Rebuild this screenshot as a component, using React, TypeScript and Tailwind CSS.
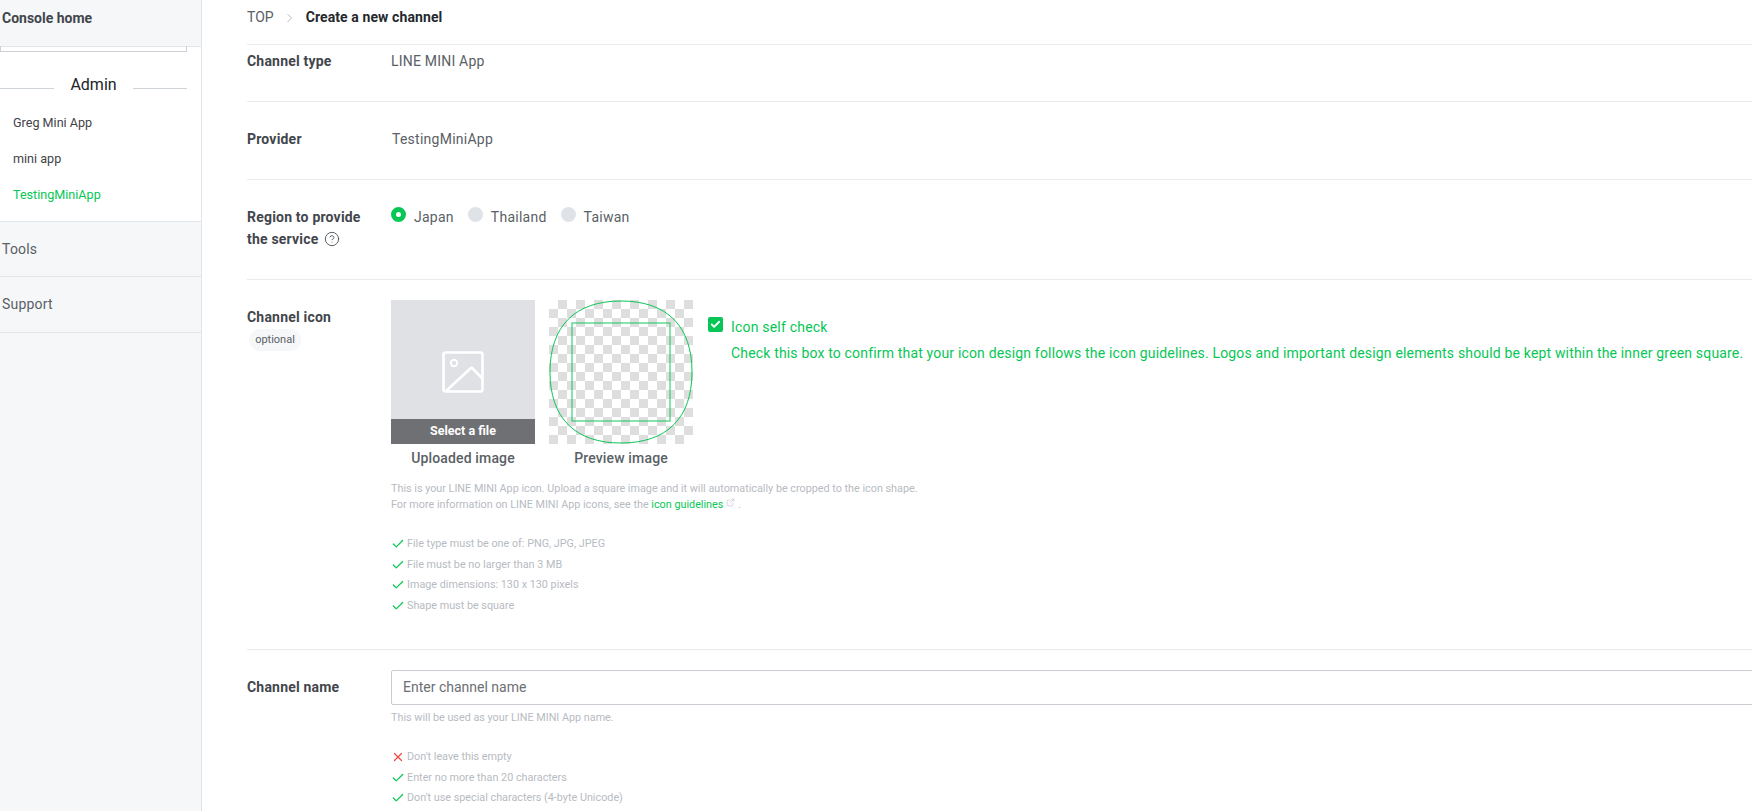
import { Check, CircleHelp, ExternalLink, X } from "lucide-react"
import type { ReactNode } from "react"

const sidebarApps = ["Greg Mini App", "mini app", "TestingMiniApp"]
const fileRules = [
    "File type must be one of: PNG, JPG, JPEG",
    "File must be no larger than 3 MB",
    "Image dimensions: 130 x 130 pixels",
    "Shape must be square",
]

function Rule({ text, ok = true }: { text: string, ok?: boolean }) {
    return (
        <li className="flex items-center h-[20.5px] text-[10.8px] text-[#b7bbc2]">
            {ok ? (
                <Check className="w-[14px] h-[14px] text-[#06c755] mr-[2px] shrink-0" strokeWidth={2.1} />
            ) : (
                <X className="w-[14px] h-[14px] text-[#ef4a45] mr-[2px] shrink-0" strokeWidth={2.1} />
            )}
            {text}
        </li>
    )
}

function FormRow({ label, className, children }: { label: ReactNode, className: string, children: ReactNode }) {
    return (
        <div className={`flex border-b border-[#e9ebee] ${className}`}>
            <div className="w-[144px] shrink-0 text-sm leading-[22px] font-bold tracking-[0.2px] text-[#42464c]">{label}</div>
            <div className="flex-1 min-w-0">{children}</div>
        </div>
    )
}

function Radio({ label, selected = false }: { label: string, selected?: boolean }) {
    return (
        <div className="flex items-start">
            {selected ? (
                <span className="w-[15px] h-[15px] rounded-full border-[5px] border-[#06c755] bg-white" />
            ) : (
                <span className="w-[15px] h-[15px] rounded-full bg-[#dfe2e7]" />
            )}
            <span className="ml-2 text-sm leading-[22px] text-[#5a5f66] -mt-[1px] tracking-[0.25px]">{label}</span>
        </div>
    )
}

export default function App() {
    return (
        <div className="flex h-screen overflow-hidden bg-white font-['Roboto',sans-serif]">
            <aside className="w-[202px] shrink-0 border-r border-[#e1e5ea] bg-white flex flex-col">
                <div className="h-[47px] bg-[#f5f7f9] border-b border-[#e1e5ea] pl-[2px] pt-[9px] text-sm leading-[18px] font-bold text-[#42464c]">
                    Console home
                </div>
                <div className="w-[187px] h-[6px] -mt-px border border-t-0 border-[#cdd1d7]" />
                <div className="w-[187px] flex items-center mt-[23px] h-[20px]">
                    <div className="w-[54px] h-px bg-[#cfd4da] mt-[6px]" />
                    <span className="flex-1 text-center text-base text-[#20242a]">Admin</span>
                    <div className="w-[54px] h-px bg-[#cfd4da] mt-[6px]" />
                </div>
                <ul className="pt-[10px] pb-[8px] pl-[13px]">
                    {sidebarApps.map((app) => (
                        <li
                            key={app}
                            className={`h-[36px] flex items-center text-[12.6px] ${app === "TestingMiniApp" ? "text-[#06c755]" : "text-[#3f4349]"}`}
                        >
                            {app}
                        </li>
                    ))}
                </ul>
                <div className="flex-1 bg-[#f5f7f9] border-t border-[#e1e5ea]">
                    <div className="h-[55px] pb-[1px] border-b border-[#e1e5ea] pl-[2px] flex items-center text-sm tracking-[0.2px] text-[#5a5f66]">Tools</div>
                    <div className="h-[56px] pb-[1px] border-b border-[#e1e5ea] pl-[2px] flex items-center text-sm tracking-[0.2px] text-[#5a5f66]">Support</div>
                </div>
            </aside>

            <main className="flex-1 min-w-0 pl-[45px]">
                <div className="h-[45px] border-b border-[#e9ebee] flex items-start pt-[8px] text-sm leading-[18px]">
                    <span className="text-[#5a5f66]">TOP</span>
                    <svg viewBox="0 0 8 10" className="w-[8px] h-[10px] ml-[12px] mr-[12px] mt-[5px] text-[#b7bbc2]" fill="none" stroke="currentColor">
                        <path d="M1.5 1l4 4-4 4" />
                    </svg>
                    <span className="font-bold tracking-[0.1px] text-[#25282d]">Create a new channel</span>
                </div>

                <FormRow label="Channel type" className="h-[57px] pt-[5px]">
                    <p className="text-sm leading-[22px] font-normal text-[#5a5f66] tracking-[0.2px]">LINE MINI App</p>
                </FormRow>

                <FormRow label="Provider" className="h-[78px] pt-[26px]">
                    <p className="text-sm leading-[22px] text-[#5a5f66] tracking-[0.25px] pl-px">TestingMiniApp</p>
                </FormRow>

                <FormRow
                    className="h-[100px] pt-[26px]"
                    label={
                        <>
                            Region to provide<br />
                            the service
                            <CircleHelp className="inline w-[16px] h-[16px] ml-[6px] -mt-[2px] text-[#5a5f66]" strokeWidth={1.5} />
                        </>
                    }
                >
                    <div className="flex gap-[14px] pt-[1px]">
                        <Radio label="Japan" selected />
                        <Radio label="Thailand" />
                        <Radio label="Taiwan" />
                    </div>
                </FormRow>

                <FormRow
                    className="h-[370px] pt-[20px]"
                    label={
                        <div className="pt-[6px]">
                            Channel icon
                            <div className="mt-[1px] ml-[2px] w-[52px] h-[22px] rounded-full bg-[#f5f7f9] flex items-center justify-center text-[11px] font-normal tracking-normal text-[#5a5f66]">
                                optional
                            </div>
                        </div>
                    }
                >
                    <div className="flex items-start">
                        <div className="w-[144px]">
                            <div className="relative w-[144px] h-[144px] bg-[#dfe1e5] flex justify-center pt-[51px]">
                                <svg viewBox="0 0 42 42" className="w-[42px] h-[42px]" fill="none" stroke="#fff" strokeWidth="2.6" strokeLinejoin="round">
                                    <rect x="1.5" y="1.5" width="39" height="39" rx="2" />
                                    <circle cx="12" cy="12" r="3.2" strokeWidth="2" />
                                    <path d="M4 40 L29.5 16.5 L40 27" />
                                </svg>
                                <div className="absolute inset-x-0 bottom-0 h-[25px] bg-[#6f7073] flex items-center justify-center text-[12.5px] font-bold text-white">
                                    Select a file
                                </div>
                            </div>
                            <p className="mt-[3px] text-center text-sm leading-[22px] font-medium tracking-[0.15px] text-[#5a5f66]">Uploaded image</p>
                        </div>
                        <div className="w-[144px] ml-[14px]">
                            <div className="relative w-[144px] h-[144px] bg-[repeating-conic-gradient(#dedede_0_25%,#fff_0_50%)] bg-[length:18px_18px]">
                                <svg viewBox="0 0 144 144" className="absolute inset-0 w-[144px] h-[144px]" fill="none">
                                    <path d="M72 1 C118 1 143 26 143 72 S118 143 72 143 S1 118 1 72 S26 1 72 1Z" stroke="#06c755" strokeWidth="1" />
                                    <rect x="23" y="23" width="98" height="98" stroke="#06c755" strokeOpacity="0.6" strokeWidth="1.6" />
                                </svg>
                            </div>
                            <p className="mt-[3px] text-center text-sm leading-[22px] font-medium tracking-[0.15px] text-[#5a5f66]">Preview image</p>
                        </div>
                        <div className="ml-[15px] pt-[17px] flex items-start">
                            <span className="w-[15px] h-[15px] rounded-[2px] bg-[#06c755] flex items-center justify-center shrink-0">
                                <Check className="w-[11px] h-[11px] text-white" strokeWidth={4} />
                            </span>
                            <div className="ml-[8px] text-sm text-[#06c755] -mt-[1px]">
                                <p className="leading-[22px] tracking-[0.2px]">Icon self check</p>
                                <p className="leading-[22px] mt-[4px] whitespace-nowrap tracking-[0.17px]">
                                    Check this box to confirm that your icon design follows the icon guidelines. Logos and important design elements should be kept within the inner green square.
                                </p>
                            </div>
                        </div>
                    </div>
                    <div className="mt-[12px] text-[10.8px] leading-[16px] text-[#b7bbc2]">
                        <p>This is your LINE MINI App icon. Upload a square image and it will automatically be cropped to the icon shape.</p>
                        <p>
                            For more information on LINE MINI App icons, see the <span className="text-[#06c755]">icon guidelines</span>
                            <ExternalLink className="inline w-[9px] h-[9px] ml-[3px] -mt-[6px]" strokeWidth={1.5} /> .
                        </p>
                    </div>
                    <ul className="mt-[21px]">
                        {fileRules.map((rule) => (
                            <Rule key={rule} text={rule} />
                        ))}
                    </ul>
                </FormRow>

                <div className="flex pt-[20px]">
                    <div className="w-[144px] shrink-0 text-sm leading-[34px] font-bold tracking-[0.2px] text-[#42464c]">Channel name</div>
                    <div className="flex-1 min-w-0">
                        <input
                            type="text"
                            placeholder="Enter channel name"
                            className="block w-[calc(100%+2px)] h-[35px] px-[11px] pb-[1px] border border-[#c9ccd2] rounded-[2px] text-sm outline-none placeholder:text-[#6b6f75]"
                        />
                        <p className="mt-[5px] text-[10.8px] leading-[16px] text-[#b7bbc2]">This will be used as your LINE MINI App name.</p>
                        <ul className="mt-[21px]">
                            <Rule text="Don't leave this empty" ok={false} />
                            <Rule text="Enter no more than 20 characters" />
                            <Rule text="Don't use special characters (4-byte Unicode)" />
                        </ul>
                    </div>
                </div>
            </main>
        </div>
    )
}
